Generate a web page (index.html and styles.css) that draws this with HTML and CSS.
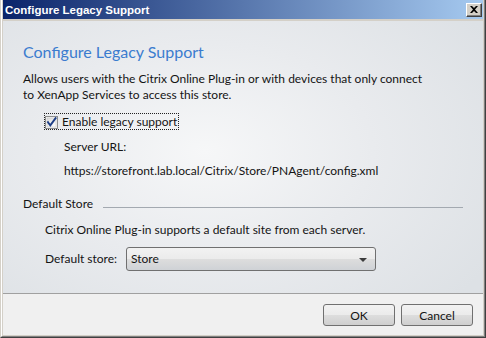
FILE: index.html
```html
<!DOCTYPE html>
<html>
<head>
<meta charset="utf-8">
<link rel="stylesheet" href="styles.css">
</head>
<body>
<div class="frame">
  <div class="frame-inner">
    <div class="titlebar">
      <span class="title-text">Configure Legacy Support</span>
      <span class="close-btn">
        <svg width="8" height="7" viewBox="0 0 8 7"><path d="M0 0h2l2 2 2-2h2L5 3.5 8 7H6L4 5 2 7H0l3-3.5z" fill="#000"/></svg>
      </span>
    </div>
    <div class="client">
      <div class="content">
        <div class="heading">Configure Legacy Support</div>
        <div class="desc">Allows users with the Citrix Online Plug-in or with devices that only connect<br>to XenApp Services to access this store.</div>
        <div class="check-row">
          <span class="check-focus">
            <svg class="checkbox" width="13" height="13" viewBox="0 0 13 13">
              <defs>
                <linearGradient id="cbg" x1="0" y1="0" x2="1" y2="1">
                  <stop offset="0" stop-color="#dcdcdc"/>
                  <stop offset="1" stop-color="#ffffff"/>
                </linearGradient>
              </defs>
              <rect x="0.5" y="0.5" width="12" height="12" fill="#f4f4f4" stroke="#8e8f8f"/>
              <rect x="2" y="2" width="9" height="9" fill="url(#cbg)" stroke="#c6c6c6" stroke-width="0.6"/>
              <path d="M3 6.2 L5.3 9.3 L10.6 2.2" fill="none" stroke="#1e3f86" stroke-width="1.9" stroke-linecap="square"/>
            </svg>
            <span class="check-label">Enable legacy support</span>
          </span>
        </div>
        <div class="url-label">Server URL:</div>
        <div class="url">https://storefront.lab.local/Citrix/Store/PNAgent/config.xml</div>
        <div class="group">
          <span class="group-title">Default Store</span>
          <span class="group-rule"></span>
        </div>
        <div class="info">Citrix Online Plug-in supports a default site from each server.</div>
        <div class="store-row">
          <span class="store-label">Default store:</span>
          <div class="select">
            <span class="select-value">Store</span>
            <svg class="select-arrow" width="8" height="4" viewBox="0 0 8 4"><path d="M0 0h8L4 4z" fill="#3c3c3c"/></svg>
          </div>
        </div>
      </div>
      <div class="footer">
        <button class="btn">OK</button>
        <button class="btn">Cancel</button>
      </div>
    </div>
  </div>
</div>
</body>
</html>
```

FILE: styles.css
```css
html, body {
  margin: 0;
  padding: 0;
}
body {
  width: 486px;
  height: 338px;
  overflow: hidden;
  font-family: "Lato", "Open Sans", sans-serif;
  font-size: 12px;
  color: #141414;
}
.frame {
  box-sizing: border-box;
  width: 486px;
  height: 338px;
  border-left: 1px solid #d4d0c8;
  border-right: 1px solid #404040;
  border-bottom: 1px solid #404040;
  background: #d4d0c8;
}
.frame-inner {
  box-sizing: border-box;
  height: 100%;
  border-left: 1px solid #ffffff;
  border-right: 1px solid #808080;
  border-bottom: 1px solid #808080;
  padding: 0 1px 1px 1px;
  display: flex;
  flex-direction: column;
}
.titlebar {
  height: 19px;
  flex: none;
  display: flex;
  align-items: center;
  justify-content: space-between;
  background: linear-gradient(to right, #0a246a, #a6caf0);
  padding: 0 1px 0 2px;
}
.title-text {
  font-family: "Liberation Sans", Arial, sans-serif;
  font-weight: bold;
  font-size: 11.5px;
  color: #ffffff;
}
.close-btn {
  box-sizing: border-box;
  width: 16px;
  height: 14px;
  background: #d4d0c8;
  border-top: 1px solid #ffffff;
  border-left: 1px solid #ffffff;
  border-right: 1px solid #404040;
  border-bottom: 1px solid #404040;
  box-shadow: inset -1px -1px 0 #808080;
  display: flex;
  align-items: center;
  justify-content: center;
  padding: 0 1px 1px 0;
}
.client {
  flex: 1;
  margin-top: 2px;
  display: flex;
  flex-direction: column;
  min-height: 0;
}
.content {
  flex: 1;
  padding: 21px 20px 0 20px;
  background: radial-gradient(ellipse 70% 80% at 42% 48%, #f6f7f8 0%, #e9ebee 50%, #dde1e5 100%);
  border-bottom: 1px solid #a0a0a0;
  display: flex;
  flex-direction: column;
}
.heading {
  font-size: 16px;
  line-height: 20px;
  color: #3b7ccf;
}
.desc {
  margin-top: 9px;
  line-height: 16px;
}
.check-row {
  margin-top: 11px;
  margin-left: 22px;
  display: flex;
}
.check-focus {
  display: flex;
  align-items: center;
  height: 15px;
  outline: 1px dotted #222;
  outline-offset: 0;
  padding-right: 1px;
}
.checkbox {
  flex: none;
  margin-top: 1px;
}
.check-label {
  margin-left: 4px;
  line-height: 16px;
}
.url-label {
  margin-top: 10px;
  margin-left: 41px;
  line-height: 16px;
}
.url {
  margin-top: 8px;
  margin-left: 41px;
  line-height: 16px;
}
.group {
  margin-top: 17px;
  display: flex;
  line-height: 16px;
}
.group-rule {
  flex: 1;
  height: 1px;
  margin-top: 11px;
  margin-left: 10px;
  background: #a3a9b0;
}
.info {
  margin-top: 10px;
  margin-left: 22px;
  line-height: 16px;
}
.store-row {
  margin-top: 9px;
  margin-left: 22px;
  display: flex;
  align-items: center;
}
.store-label {
  width: 81px;
  line-height: 24px;
}
.select {
  box-sizing: border-box;
  width: 250px;
  height: 24px;
  border: 1px solid #707070;
  border-radius: 3px;
  background: linear-gradient(to bottom, #f2f2f2 0%, #ebebeb 50%, #dddddd 51%, #cfd2d6 100%);
  display: flex;
  align-items: center;
  justify-content: space-between;
  padding: 0 8px 0 4px;
}
.select-value {
  line-height: 20px;
}
.select-arrow {
  margin-top: 1px;
}
.footer {
  height: 41px;
  flex: none;
  background: #f0f0f0;
  display: flex;
  justify-content: flex-end;
  align-items: flex-start;
  padding: 10px 10px 0 0;
  box-sizing: border-box;
  gap: 6px;
}
.btn {
  box-sizing: border-box;
  width: 72px;
  height: 22px;
  border: 1px solid #707070;
  border-radius: 3px;
  background: linear-gradient(to bottom, #f2f2f2 0%, #ebebeb 50%, #dddddd 51%, #cfcfcf 100%);
  font-family: "Lato", "Open Sans", sans-serif;
  font-size: 12px;
  color: #141414;
  padding: 0;
  margin: 0;
}
```
